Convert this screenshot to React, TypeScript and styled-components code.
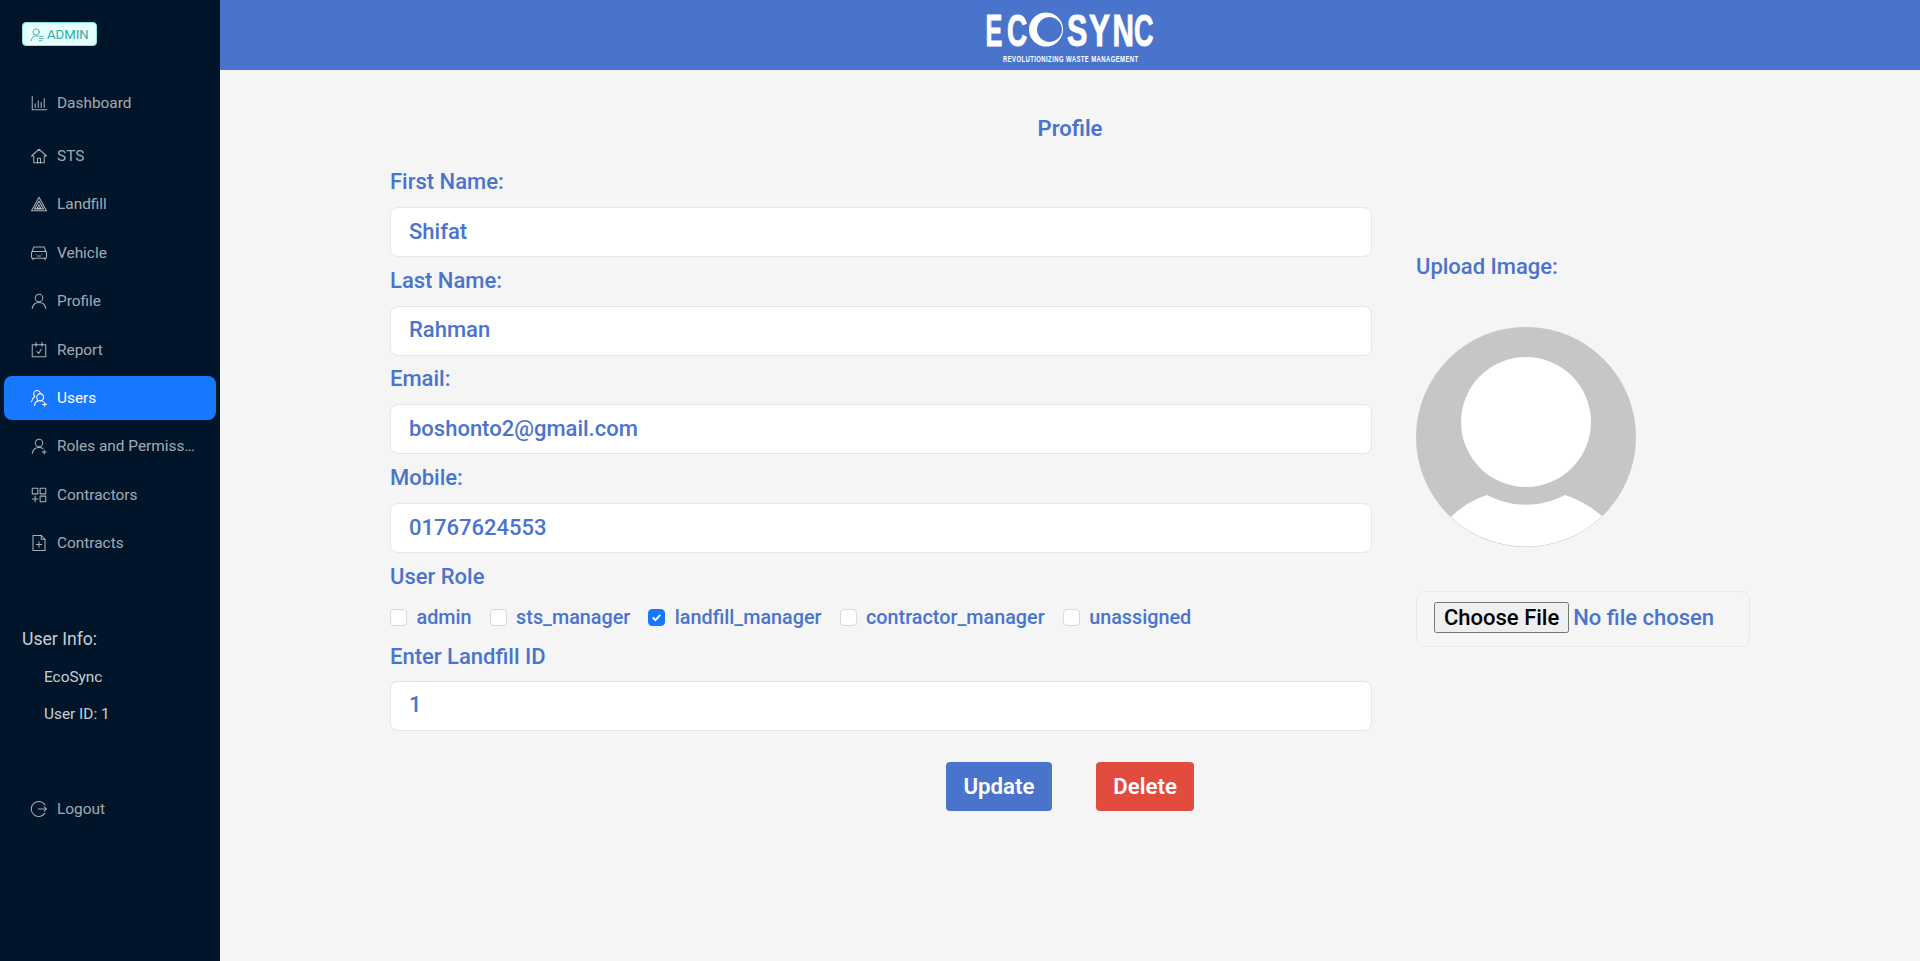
import React from 'react';
import styled, { createGlobalStyle } from 'styled-components';

const BLUE = '#4a74cc';

const GlobalStyle = createGlobalStyle`
  html, body {
    margin: 0;
    padding: 0;
    background: #f5f5f5;
    font-family: Roboto, 'Liberation Sans', sans-serif;
  }
  * { box-sizing: border-box; }
`;

const Page = styled.div`
  display: flex;
  width: 100%;
  height: 961px;
  overflow: hidden;
`;

const Sidebar = styled.aside`
  width: 220px;
  flex: none;
  background: #001529;
  display: flex;
  flex-direction: column;
`;

const RoleTag = styled.div`
  align-self: flex-start;
  display: flex;
  align-items: center;
  gap: 2px;
  height: 24px;
  margin: 22px 0 0 22px;
  padding: 0 7px;
  background: #e6fffb;
  border: 1px solid #87e8de;
  border-radius: 4px;
  color: #3aa8a8;
  font-size: 13.2px;
  svg { width: 15px; height: 15px; }
`;

const Menu = styled.nav`
  display: flex;
  flex-direction: column;
  gap: 4.4px;
  margin: 34.6px 4px 0;
`;

const MenuItem = styled.div<{ $active?: boolean; $first?: boolean }>`
  display: flex;
  align-items: center;
  gap: 9px;
  height: 44px;
  padding: 0 20px 0 26px;
  margin-bottom: ${p => (p.$first ? '5px' : '0')};
  border-radius: 8px;
  font-size: 15.4px;
  color: ${p => (p.$active ? '#fff' : 'rgba(255, 255, 255, 0.65)')};
  background: ${p => (p.$active ? '#1677ff' : 'transparent')};
  svg { width: 18px; height: 18px; flex: none; }
  span { white-space: nowrap; overflow: hidden; text-overflow: ellipsis; }
`;

const InfoTitle = styled.div`
  margin: 62px 0 0 22px;
  color: rgba(255, 255, 255, 0.8);
  font-size: 17.6px;
  line-height: 24px;
`;

const InfoLine = styled.div<{ $gap: number }>`
  margin: ${p => p.$gap}px 0 0 44px;
  color: rgba(255, 255, 255, 0.8);
  font-size: 15.4px;
  line-height: 20px;
`;

const LogoutItem = styled(MenuItem)`
  margin: 63px 4px 0;
`;

const Main = styled.main`
  flex: 1;
  display: flex;
  flex-direction: column;
`;

const Header = styled.header`
  height: 70px;
  flex: none;
  background: ${BLUE};
  display: flex;
  justify-content: center;
`;

const PageTitle = styled.h1`
  margin: 47px 0 0;
  text-align: center;
  color: ${BLUE};
  font-size: 22px;
  font-weight: 600;
  line-height: 24px;
`;

const Columns = styled.div`
  display: grid;
  grid-template-columns: 982px 334px;
  column-gap: 44px;
  padding: 28px 0 0 170px;
`;

const Form = styled.form`
  display: flex;
  flex-direction: column;
`;

const FieldLabel = styled.label`
  display: block;
  color: ${BLUE};
  font-size: 22px;
  font-weight: 500;
  line-height: 26px;
  margin-bottom: 12px;
`;

const TextInput = styled.input`
  display: block;
  width: 100%;
  height: 50px;
  margin-bottom: 10.7px;
  padding: 0 18px 2px;
  background: #fff;
  border: 1px solid #e4e6e8;
  border-radius: 8px;
  color: ${BLUE};
  font: 500 22px Roboto, sans-serif;
  outline: none;
`;

const RoleLabel = styled(FieldLabel)`
  margin-bottom: 16px;
`;

const LandfillLabel = styled(FieldLabel)`
  margin-bottom: 11px;
`;

const RoleRow = styled.div`
  display: flex;
  align-items: center;
  gap: 18px;
  height: 24px;
  margin-bottom: 14px;
`;

const RoleOption = styled.label`
  display: flex;
  align-items: center;
  gap: 9.5px;
  color: ${BLUE};
  font-size: 19.8px;
  font-weight: 500;
`;

const RoleBox = styled.span<{ $checked?: boolean }>`
  width: 17px;
  height: 17px;
  flex: none;
  display: flex;
  align-items: center;
  justify-content: center;
  border-radius: 4px;
  background: ${p => (p.$checked ? '#1677ff' : '#fff')};
  border: 1px solid ${p => (p.$checked ? '#1677ff' : '#d9d9d9')};
  svg { width: 13px; height: 13px; }
`;

const Actions = styled.div`
  display: flex;
  gap: 44px;
  margin: 21px 0 0 556px;
`;

const ActionButton = styled.button<{ $danger?: boolean }>`
  height: 49px;
  padding: 0 17.5px 2px;
  border: none;
  border-radius: 4px;
  background: ${p => (p.$danger ? '#e24c3f' : BLUE)};
  color: #fff;
  font: 600 22.2px Roboto, sans-serif;
`;

const UploadColumn = styled.div`
  display: flex;
  flex-direction: column;
  padding-top: 85px;
`;

const UploadLabel = styled(FieldLabel)`
  margin-bottom: 47px;
`;

const Avatar = styled.svg`
  display: block;
  width: 220px;
  height: 220px;
`;

const FileBox = styled.div`
  display: flex;
  align-items: center;
  height: 56px;
  margin-top: 44px;
  padding: 0 17px 3px;
  border: 1px solid #e9e9e9;
  border-radius: 8px;
`;

const FileInput = styled.input`
  width: 100%;
  color: ${BLUE};
  font: 500 22px Roboto, sans-serif;
  &::file-selector-button {
    font: 500 22px Roboto, sans-serif;
    color: #000;
    padding: 1px 8px;
  }
`;

const Ic: React.FC<{ children: React.ReactNode }> = ({ children }) => (
  <svg viewBox="0 0 24 24" fill="none" stroke="currentColor" strokeWidth={1.4} strokeLinecap="round" strokeLinejoin="round">
    {children}
  </svg>
);

const icons: Record<string, React.ReactNode> = {
  chart: <><path d="M3 3v18h19" /><path d="M7 18v-5M11 18V9M15 18v-7M19 18V6" /></>,
  home: <><path d="M2 12 12 3l10 9h-3v9H5v-9z" /><path d="M10 21v-6h4v6" /></>,
  landfill: <><path d="M12 3 22 21H2z" /><path d="M12 8 18 18.5H6z" /><path d="M12 13l2.4 4.5H9.6z" /></>,
  car: <><path d="M3 10l2-6h14l2 6" /><rect x="2" y="10" width="20" height="9" rx="1.5" /><path d="M4 19v2M20 19v2M8 14h.01M16 14h.01M10 16h4" /></>,
  user: <><circle cx="12" cy="8" r="5" /><path d="M3 22c1-6 4.5-8 9-8s8 2 9 8" /></>,
  report: <><rect x="3" y="5" width="18" height="16" /><path d="M8 2v5M16 2v5" /><path d="m9 14 2.5 2.5L15 11" /></>,
  users: <><circle cx="13.500" cy="11" r="4.500" /><path d="M6 22c.5-4 3.500-6.500 7.500-6.500 1.500 0 2.800.3 4 1" /><path d="M14 5.500C13 3.500 11.500 2 9.500 2 7 2 5 4 5 6.500c0 1.500.7 2.800 1.500 3.500-2.500 1.500-4 4-4.500 7" /><path d="M19.500 18v5M17 20.500h5" /></>,
  roleUser: <><circle cx="12" cy="8" r="5" /><path d="M3 22c1-6 4.500-8 9-8 2 0 3.800.4 5.300 1.400" /><path d="M19 17.500v5M16.500 20h5" /></>,
  grid: <><rect x="3" y="3" width="7.500" height="7.500" /><rect x="13.500" y="3" width="7.500" height="7.500" /><rect x="13.500" y="13.500" width="7.500" height="7.500" /><path d="M6.800 13.500V21M3 17.200h7.500" /></>,
  file: <><path d="M4 2h11l5 5v15H4z" /><path d="M15 2v5h5" /><path d="M12 10.500v7M8.500 14h7" /></>,
  logout: <><path d="M20 6.500A10 10 0 1 0 20 17.500" /><path d="M11 12h11M19 9l3 3-3 3" /></>,
  admin: <><circle cx="10" cy="8" r="5" /><path d="M2 22c.7-5 3.500-8 8-8 1.200 0 2.200.2 3 .5" /><path d="M15 15h6M15 18.500h6M15 22h4" /></>,
};

// x and horizontal squeeze of each logo letter, the font has no condensed cut
const logoLetters = [
  { ch: 'E', x: 1.5, sx: 0.56 },
  { ch: 'C', x: 23, sx: 0.62 },
  { ch: 'S', x: 83, sx: 0.68 },
  { ch: 'Y', x: 105, sx: 0.7 },
  { ch: 'N', x: 128.5, sx: 0.66 },
  { ch: 'C', x: 150, sx: 0.6 },
];

const Logo: React.FC = () => (
  <svg width="172" height="70" viewBox="0 0 172 70" role="img" aria-label="EcoSync">
    {logoLetters.map(l => (
      <text
        key={l.x}
        transform={`translate(${l.x} 45.500) scale(${l.sx} 1)`}
        fill="#fff"
        stroke="#fff"
        strokeWidth="1"
        fontFamily="'Liberation Sans'"
        fontWeight="700"
        fontSize="45"
      >
        {l.ch}
      </text>
    ))}
    <path fillRule="evenodd" fill="#fff" d="M62 12.500a17 17 0 1 0 .01 0zM65.500 17a12.500 12.500 0 1 0 .01 0z" />
    <text transform="translate(19 62) scale(.62 1)" fill="#fff" fontFamily="'Liberation Sans'" fontWeight="700" fontSize="9.600" textLength="218" lengthAdjust="spacing">
      REVOLUTIONIZING WASTE MANAGEMENT
    </text>
  </svg>
);

const menu: { key: string; label: string; active?: boolean }[] = [
  { key: 'chart', label: 'Dashboard' },
  { key: 'home', label: 'STS' },
  { key: 'landfill', label: 'Landfill' },
  { key: 'car', label: 'Vehicle' },
  { key: 'user', label: 'Profile' },
  { key: 'report', label: 'Report' },
  { key: 'users', label: 'Users', active: true },
  { key: 'roleUser', label: 'Roles and Permissions' },
  { key: 'grid', label: 'Contractors' },
  { key: 'file', label: 'Contracts' },
];

const fields = [
  { label: 'First Name:', value: 'Shifat' },
  { label: 'Last Name:', value: 'Rahman' },
  { label: 'Email:', value: 'boshonto2@gmail.com' },
  { label: 'Mobile:', value: '01767624553' },
];

const roles = ['admin', 'sts_manager', 'landfill_manager', 'contractor_manager', 'unassigned'];

const App: React.FC = () => (
  <Page>
    <GlobalStyle />
    <Sidebar>
      <RoleTag>
        <Ic>{icons.admin}</Ic>
        ADMIN
      </RoleTag>
      <Menu>
        {menu.map((item, i) => (
          <MenuItem key={item.key} $active={item.active} $first={i === 0}>
            <Ic>{icons[item.key]}</Ic>
            <span>{item.label}</span>
          </MenuItem>
        ))}
      </Menu>
      <InfoTitle>User Info:</InfoTitle>
      <InfoLine $gap={16}>EcoSync</InfoLine>
      <InfoLine $gap={17}>User ID: 1</InfoLine>
      <LogoutItem>
        <Ic>{icons.logout}</Ic>
        <span>Logout</span>
      </LogoutItem>
    </Sidebar>
    <Main>
      <Header>
        <Logo />
      </Header>
      <PageTitle>Profile</PageTitle>
      <Columns>
        <Form>
          {fields.map(f => (
            <div key={f.label}>
              <FieldLabel>{f.label}</FieldLabel>
              <TextInput defaultValue={f.value} />
            </div>
          ))}
          <RoleLabel>User Role</RoleLabel>
          <RoleRow>
            {roles.map(r => (
              <RoleOption key={r}>
                <RoleBox $checked={r === 'landfill_manager'}>
                  {r === 'landfill_manager' && (
                    <svg viewBox="0 0 24 24" fill="none" stroke="#fff" strokeWidth={3.500}>
                      <path d="m5 12 5 5 9-10" />
                    </svg>
                  )}
                </RoleBox>
                {r}
              </RoleOption>
            ))}
          </RoleRow>
          <LandfillLabel>Enter Landfill ID</LandfillLabel>
          <TextInput defaultValue="1" />
          <Actions>
            <ActionButton type="button">Update</ActionButton>
            <ActionButton type="button" $danger>Delete</ActionButton>
          </Actions>
        </Form>
        <UploadColumn>
          <UploadLabel>Upload Image:</UploadLabel>
          <Avatar viewBox="0 0 220 220">
            <circle cx="110" cy="110" r="110" fill="#c6c6c6" />
            <circle cx="110" cy="95" r="65" fill="#fff" />
            <path d="M35 190 C48 177 60 172 71 168 C96 181 124 181 149 168 C160 172 172 177 186 189 A110 110 0 0 1 35 190 Z" fill="#fff" />
          </Avatar>
          <FileBox>
            <FileInput type="file" />
          </FileBox>
        </UploadColumn>
      </Columns>
    </Main>
  </Page>
);

export default App;
